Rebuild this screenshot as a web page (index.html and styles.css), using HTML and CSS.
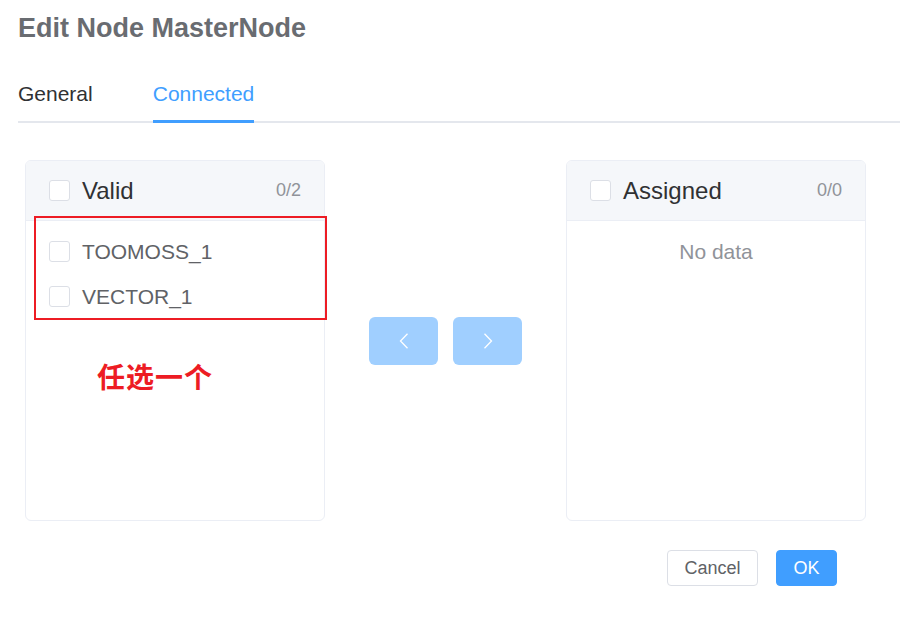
FILE: index.html
```html
<!DOCTYPE html>
<html>
<head>
<meta charset="utf-8">
<link rel="stylesheet" href="styles.css">
</head>
<body>
<div class="dialog">
  <div class="title">Edit Node MasterNode</div>
  <div class="tabs">
    <div class="tab"><span>General</span></div>
    <div class="tab active"><span>Connected</span></div>
  </div>
  <div class="transfer">
    <div class="panel">
      <div class="panel-header">
        <span class="checkbox"></span>
        <span class="panel-title">Valid</span>
        <span class="count">0/2</span>
      </div>
      <div class="panel-body">
        <div class="item"><span class="checkbox"></span><span class="item-label">TOOMOSS_1</span></div>
        <div class="item"><span class="checkbox"></span><span class="item-label">VECTOR_1</span></div>
      </div>
    </div>
    <div class="buttons">
      <button class="move-btn" type="button">
        <svg width="10" height="16" viewBox="0 0 10 16"><polyline points="8.5,0.8 1.5,8 8.5,15.2" fill="none" stroke="#fff" stroke-width="1.3"/></svg>
      </button>
      <button class="move-btn" type="button">
        <svg width="10" height="16" viewBox="0 0 10 16"><polyline points="1.5,0.8 8.5,8 1.5,15.2" fill="none" stroke="#fff" stroke-width="1.3"/></svg>
      </button>
    </div>
    <div class="panel">
      <div class="panel-header">
        <span class="checkbox"></span>
        <span class="panel-title">Assigned</span>
        <span class="count">0/0</span>
      </div>
      <div class="panel-body">
        <div class="empty">No data</div>
      </div>
    </div>
    <div class="mark-box"></div>
    <div class="mark-text">任选一个</div>
  </div>
  <div class="footer">
    <button class="btn btn-cancel" type="button">Cancel</button>
    <button class="btn btn-ok" type="button">OK</button>
  </div>
</div>
</body>
</html>
```
FILE: styles.css
```css
html, body {
  margin: 0;
  padding: 0;
  background: #fff;
}
body {
  font-family: "Liberation Sans", Arial, "Noto Sans CJK SC", sans-serif;
  width: 900px;
  height: 621px;
  overflow: hidden;
}
.dialog {
  padding: 10px 0 0 18px;
}
.title {
  font-size: 27px;
  font-weight: bold;
  line-height: 36px;
  color: #696c71;
}
.tabs {
  display: flex;
  margin-top: 17px;
  border-bottom: 2px solid #e4e7ed;
}
.tab {
  height: 60px;
  margin-bottom: -2px;
  padding: 0 30px;
  font-size: 21px;
  color: #303133;
}
.tab:first-child {
  padding-left: 0;
}
.tab span {
  display: block;
  height: 60px;
  line-height: 62px;
}
.tab.active span {
  color: #409eff;
  box-shadow: inset 0 -3px 0 #409eff;
}
.transfer {
  position: relative;
  display: flex;
  align-items: center;
  margin-top: 37px;
  padding-left: 7px;
}
.panel {
  width: 300px;
  height: 361px;
  box-sizing: border-box;
  border: 1px solid #ebeef5;
  border-radius: 6px;
  overflow: hidden;
  background: #fff;
}
.panel-header {
  display: flex;
  align-items: center;
  height: 60px;
  box-sizing: border-box;
  padding: 0 23px;
  background: #f5f7fa;
  border-bottom: 1px solid #ebeef5;
}
.checkbox {
  display: inline-block;
  width: 21px;
  height: 21px;
  box-sizing: border-box;
  border: 1px solid #dcdfe6;
  border-radius: 3px;
  background: #fff;
  flex: none;
}
.panel-title {
  margin-left: 12px;
  font-size: 24px;
  color: #303133;
}
.count {
  margin-left: auto;
  font-size: 18px;
  color: #909399;
}
.panel-body {
  padding-top: 8px;
}
.item {
  display: flex;
  align-items: center;
  height: 45px;
  padding-left: 23px;
}
.item-label {
  margin-left: 12px;
  font-size: 21px;
  color: #606266;
}
.empty {
  height: 45px;
  line-height: 45px;
  text-align: center;
  font-size: 21px;
  color: #909399;
}
.buttons {
  display: flex;
  gap: 15px;
  margin: 0 44px;
}
.move-btn {
  width: 69px;
  height: 48px;
  border: none;
  border-radius: 6px;
  background: #a0cfff;
  display: flex;
  align-items: center;
  justify-content: center;
  padding: 0;
}
.move-btn svg {
  display: block;
}
.mark-box {
  position: absolute;
  left: 16px;
  top: 56px;
  width: 293px;
  height: 104px;
  box-sizing: border-box;
  border: 2px solid #ed1c24;
}
.mark-text {
  position: absolute;
  left: 79px;
  top: 201px;
  font-family: "Noto Sans CJK SC", sans-serif;
  font-size: 28px;
  line-height: 30px;
  font-weight: bold;
  color: #ed1c24;
  letter-spacing: 1px;
}
.footer {
  display: flex;
  justify-content: flex-end;
  gap: 18px;
  margin-top: 29px;
  padding-right: 63px;
}
.btn {
  height: 36px;
  box-sizing: border-box;
  border-radius: 4px;
  font-family: "Liberation Sans", Arial, sans-serif;
  font-size: 18px;
  padding: 0;
  line-height: 34px;
}
.btn-cancel {
  width: 91px;
  border: 1px solid #dcdfe6;
  background: #fff;
  color: #606266;
}
.btn-ok {
  width: 61px;
  border: 1px solid #409eff;
  background: #409eff;
  color: #fff;
}
```
